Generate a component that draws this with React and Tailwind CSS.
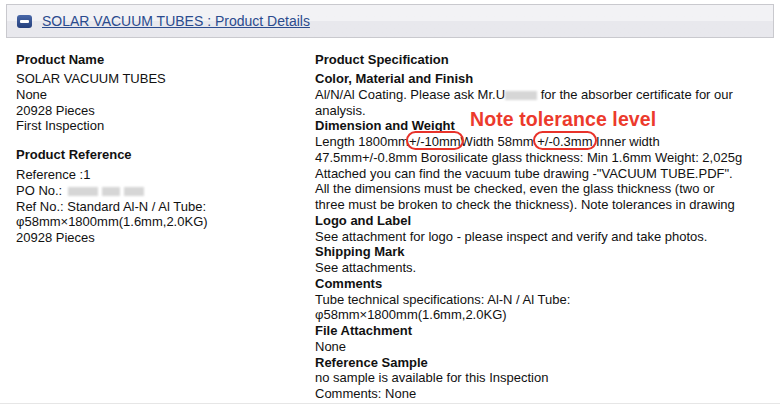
import React from 'react';

const Blur = ({ w, className = '' }) => (
  <span
    className={`inline-block h-[9px] align-middle bg-[#d6d6d6] blur-[1.2px] ${className}`}
    style={{ width: w }}
  />
);

const Circled = ({ children, className = '' }) => (
  <span className="relative">
    {children}
    <span className={`absolute -top-[3px] -bottom-[1px] rounded-full border-2 border-[#e8322a] ${className}`} />
  </span>
);

const Heading = ({ children, className = '' }) => (
  <div className={`font-bold leading-[16px] ${className}`}>{children}</div>
);

const App = () => {
  return (
    <div className="relative w-[780px] h-[404px] overflow-hidden bg-white text-[13px] text-[#111] font-['Liberation_Sans',Arial,sans-serif] border-b border-[#e6e6e6]">
      {/* Header bar */}
      <div className="mx-[6px] mt-[4px] h-[34px] border border-[#c9c9ce] bg-gradient-to-b from-[#f2f2f5] from-50% to-[#e8e8ed] to-50% flex items-center pl-[10px]">
        <span className="w-[15px] h-[13px] rounded-[3px] bg-gradient-to-b from-[#4a68a8] to-[#243f7c] flex items-center justify-center mr-[10px]">
          <span className="w-[9px] h-[3px] bg-white rounded-[1px]" />
        </span>
        <span className="text-[14px] text-[#2b4b8e] underline underline-offset-[1px] leading-none">
          SOLAR VACUUM TUBES : Product Details
        </span>
      </div>

      {/* Body */}
      <div className="flex pt-[14px] pl-[16px]">
        {/* Left column */}
        <div className="w-[299px] leading-[15.75px]">
          <Heading className="mb-[3px]">Product Name</Heading>
          <div>SOLAR VACUUM TUBES</div>
          <div>None</div>
          <div>20928 Pieces</div>
          <div>First Inspection</div>

          <Heading className="mt-[13px] mb-[4px]">Product Reference</Heading>
          <div>Reference :1</div>
          <div>
            PO No.: <Blur w={30} className="ml-[2px]" />
            <Blur w={18} className="ml-[4px]" />
            <Blur w={20} className="ml-[4px]" />
          </div>
          <div>Ref No.: Standard Al-N / Al Tube:</div>
          <div>φ58mm×1800mm(1.6mm,2.0KG)</div>
          <div>20928 Pieces</div>
        </div>

        {/* Right column */}
        <div className="flex-1 leading-[15.75px]">
          <Heading className="mb-[3px]">Product Specification</Heading>
          <div className="font-bold">Color, Material and Finish</div>
          <div>
            Al/N/Al Coating. Please ask Mr.U<Blur w={32} /> for the absorber certificate for our
          </div>
          <div>analysis.</div>
          <div className="font-bold">Dimension and Weight</div>
          <div className="whitespace-nowrap">
            Length 1800mm<Circled className="-left-[3px] -right-[3px]">+/-10mm</Circled>Width 58mm{' '}
            <Circled className="-left-[4px] -right-[1px]">+/-0.3mm </Circled>Inner width
          </div>
          <div>47.5mm+/-0.8mm Borosilicate glass thickness: Min 1.6mm Weight: 2,025g</div>
          <div>Attached you can find the vacuum tube drawing -"VACUUM TUBE.PDF".</div>
          <div>All the dimensions must be checked, even the glass thickness (two or</div>
          <div>three must be broken to check the thickness). Note tolerances in drawing</div>
          <div className="font-bold">Logo and Label</div>
          <div>See attachment for logo - please inspect and verify and take photos.</div>
          <div className="font-bold">Shipping Mark</div>
          <div>See attachments.</div>
          <div className="font-bold">Comments</div>
          <div>Tube technical specifications: Al-N / Al Tube:</div>
          <div>φ58mm×1800mm(1.6mm,2.0KG)</div>
          <div className="font-bold">File Attachment</div>
          <div>None</div>
          <div className="font-bold">Reference Sample</div>
          <div>no sample is available for this Inspection</div>
          <div>Comments: None</div>
        </div>
      </div>

      {/* Annotation */}
      <div className="absolute left-[470px] top-[107px] text-[19.5px] font-bold leading-[24px] text-[#ec3a2c] tracking-[0.1px]">
        Note tolerance level
      </div>
    </div>
  );
};

export default App;
